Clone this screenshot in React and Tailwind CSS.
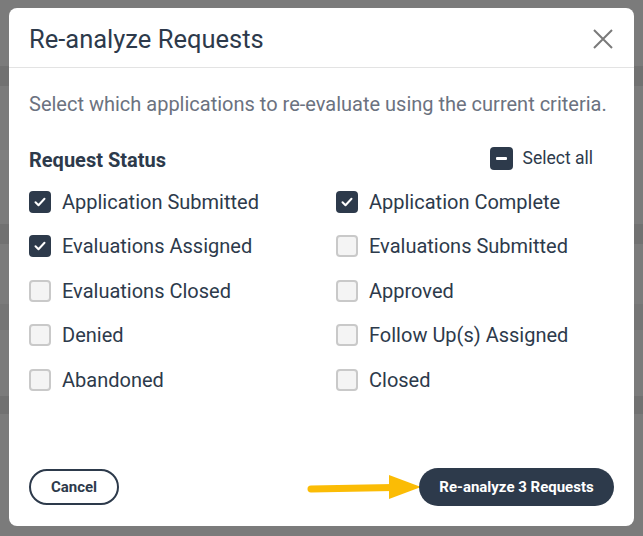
import React from "react";

const items = [
  ["Application Submitted", true],
  ["Application Complete", true],
  ["Evaluations Assigned", true],
  ["Evaluations Submitted", false],
  ["Evaluations Closed", false],
  ["Approved", false],
  ["Denied", false],
  ["Follow Up(s) Assigned", false],
  ["Abandoned", false],
  ["Closed", false],
];

function Box({ checked }) {
  if (checked) {
    return (
      <span className="w-[22px] h-[22px] rounded-[4px] bg-[#2d3a4b] flex items-center justify-center shrink-0">
        <svg width="14" height="14" viewBox="0 0 14 14" fill="none">
          <path d="M2.5 7.2l3 3L11.5 3.8" stroke="white" strokeWidth="2" strokeLinecap="round" strokeLinejoin="round" />
        </svg>
      </span>
    );
  }
  return <span className="w-[22px] h-[22px] rounded-[4px] bg-[#f4f4f4] border-2 border-[#c9c9c9] shrink-0"></span>;
}

export default function App() {
  return (
    <div className="relative w-[643px] h-[536px] bg-[#7b7b7b] overflow-hidden font-['Roboto',sans-serif]">
      {/* faint table rows behind overlay */}
      <div className="flex flex-col">
        <div className="h-[66px]"></div>
        <div className="h-[20px] bg-[#717171]"></div>
        <div className="h-[64px]"></div>
        <div className="h-[10px] bg-[#7f7f7f]"></div>
        <div className="h-[64px]"></div>
        <div className="h-[20px] bg-[#717171]"></div>
        <div className="h-[60px]"></div>
        <div className="h-[26px] bg-[#757575]"></div>
        <div className="h-[66px]"></div>
        <div className="h-[18px] bg-[#717171]"></div>
      </div>

      <div className="absolute left-[9px] top-[8px] w-[625px] h-[518px] bg-white rounded-[8px] flex flex-col">
        <div className="h-[60px] flex items-center justify-between pl-[20px] pr-[20px] border-b border-[#e3e3e3]">
          <h1 className="text-[25.5px] text-[#2d3a4b] font-normal pt-[3px]">Re-analyze Requests</h1>
          <svg width="22" height="22" viewBox="0 0 22 22" className="mt-[2px]">
            <path d="M2 2L20 20M20 2L2 20" stroke="#7a7a7a" strokeWidth="2" />
          </svg>
        </div>

        <div className="flex-1 flex flex-col px-[20px]">
          <p className="mt-[23px] text-[20px] text-[#6b7280] leading-[26px]">
            Select which applications to re-evaluate using the current criteria.
          </p>

          <div className="mt-[28px] flex items-center justify-between pr-[21px]">
            <span className="text-[20px] font-bold text-[#2d3a4b]">Request Status</span>
            <div className="flex items-center gap-[10px] -mt-[3px]">
              <span className="w-[23px] h-[23px] rounded-[4px] bg-[#2d3a4b] flex items-center justify-center">
                <span className="w-[11px] h-[3px] bg-white rounded-[1px]"></span>
              </span>
              <span className="text-[17.5px] text-[#2d3a4b]">Select all</span>
            </div>
          </div>

          <div className="mt-[15.5px] grid grid-cols-[307px_1fr] gap-y-[22.5px]">
            {items.map(([label, checked]) => (
              <div key={label} className="flex items-center gap-[11px] h-[22px]">
                <Box checked={checked} />
                <span className="text-[20px] text-[#2d3a4b]">{label}</span>
              </div>
            ))}
          </div>

          <div className="mt-auto mb-[20px] flex items-center justify-between">
            <button className="w-[90px] h-[36px] rounded-full border-2 border-[#2d3a4b] text-[15px] font-bold text-[#2d3a4b]">
              Cancel
            </button>
            <div className="flex items-center">
              <svg width="114" height="30" viewBox="0 0 114 30" className="mr-[-2px]">
                <path d="M4 17L86 15.5" stroke="#fbbc05" strokeWidth="7" strokeLinecap="round" />
                <path d="M82 3L114 15L82 27Z" fill="#fbbc05" />
              </svg>
              <button className="w-[195px] h-[38px] rounded-full bg-[#2d3a4b] text-[15px] font-bold text-white">
                Re-analyze 3 Requests
              </button>
            </div>
          </div>
        </div>
      </div>
    </div>
  );
}
